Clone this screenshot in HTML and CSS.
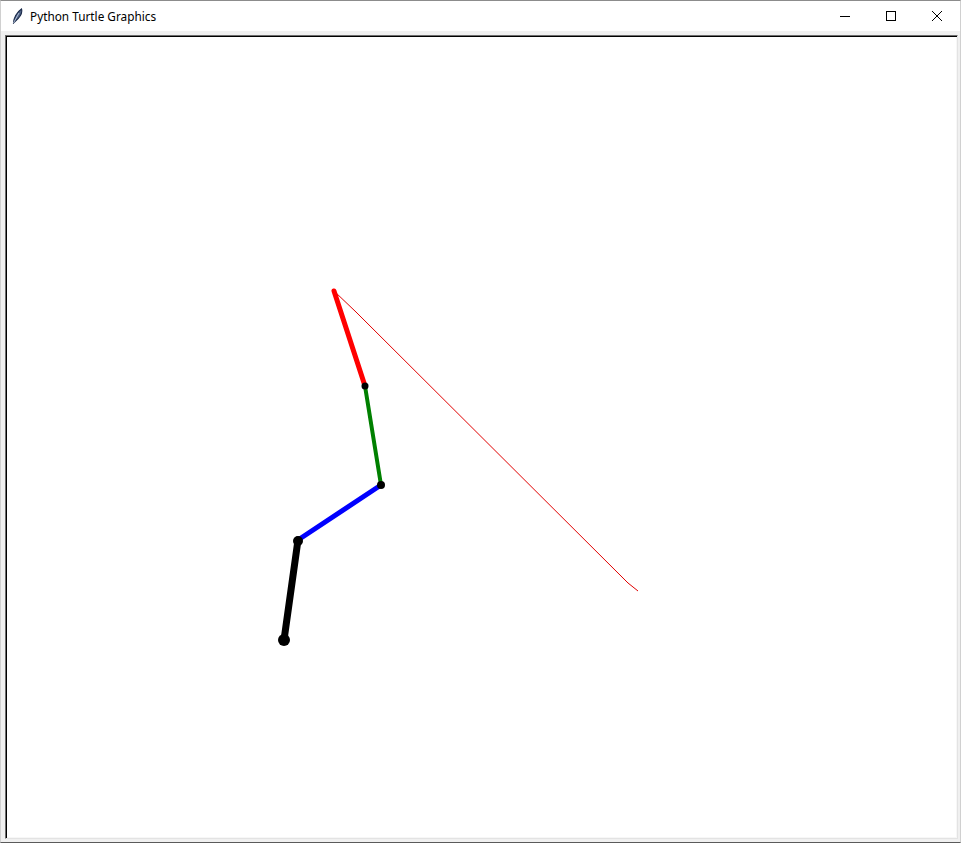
FILE: index.html
```html
<!DOCTYPE html>
<html>
<head>
<meta charset="utf-8">
<title>Python Turtle Graphics</title>
<link rel="stylesheet" href="styles.css">
</head>
<body>
<div class="window">
  <div class="titlebar">
    <div class="app-icon">
      <svg width="16" height="16" viewBox="0 0 16 16">
        <path d="M4.5 15 C4.5 10 8 4 12.5 1 C13.5 4.5 11 9.5 6 13.5 Z" fill="#4f6284" stroke="#1a2a4a" stroke-width="1.1"/>
        <path d="M4.5 15 L10 5" stroke="#c9d6ea" stroke-width="0.8" fill="none"/>
      </svg>
    </div>
    <div class="title">Python Turtle Graphics</div>
    <div class="controls">
      <div class="ctl">
        <svg width="12" height="12" viewBox="0 0 12 12"><path d="M1 6.5 H11" stroke="#000" stroke-width="1"/></svg>
      </div>
      <div class="ctl">
        <svg width="12" height="12" viewBox="0 0 12 12"><rect x="1.5" y="1.5" width="9" height="9" fill="none" stroke="#000" stroke-width="1"/></svg>
      </div>
      <div class="ctl">
        <svg width="12" height="12" viewBox="0 0 12 12"><path d="M1 1 L11 11 M11 1 L1 11" stroke="#000" stroke-width="1"/></svg>
      </div>
    </div>
  </div>
  <div class="frame">
    <div class="canvas">
      <svg class="drawing" viewBox="7 37 949 800" preserveAspectRatio="none">
        <polyline points="334,291 356,312 628,583 638,591" fill="none" stroke="#e00000" stroke-width="1"/>
        <line x1="334" y1="291" x2="365" y2="386" stroke="#ff0000" stroke-width="5" stroke-linecap="round"/>
        <line x1="365" y1="386" x2="381" y2="485" stroke="#008000" stroke-width="4" stroke-linecap="round"/>
        <line x1="381" y1="485" x2="298" y2="540" stroke="#0000ff" stroke-width="5" stroke-linecap="round"/>
        <line x1="298" y1="540" x2="284" y2="640" stroke="#000000" stroke-width="7" stroke-linecap="round"/>
        <circle cx="365" cy="386" r="3.5" fill="#000"/>
        <circle cx="381" cy="485" r="4" fill="#000"/>
        <circle cx="298" cy="541" r="5" fill="#000"/>
        <circle cx="284" cy="640" r="6" fill="#000"/>
      </svg>
    </div>
  </div>
</div>
</body>
</html>
```
FILE: styles.css
```css
html, body {
  margin: 0;
  padding: 0;
  background: #ffffff;
}

.window {
  width: 961px;
  height: 843px;
  box-sizing: border-box;
  border-top: 1px solid #8c8c8c;
  border-left: 1px solid #d0d0d0;
  border-right: 1px solid #d0d0d0;
  border-bottom: 1px solid #5a5a5a;
  display: flex;
  flex-direction: column;
  background: #f0f0f0;
}

.titlebar {
  height: 30px;
  flex: none;
  background: #ffffff;
  display: flex;
  align-items: center;
  font-family: "Noto Sans", "Open Sans", sans-serif;
  font-size: 11.8px;
  color: #000;
}

.app-icon {
  width: 16px;
  height: 16px;
  margin-left: 8px;
  margin-right: 5px;
  display: flex;
}

.title {
  flex: 1;
  white-space: nowrap;
}

.controls {
  display: flex;
  height: 30px;
}

.ctl {
  width: 46px;
  height: 30px;
  display: flex;
  align-items: center;
  justify-content: center;
}

.frame {
  flex: 1;
  display: flex;
  padding: 4px 2px 3px 4px;
  min-height: 0;
}

.canvas {
  flex: 1;
  display: flex;
  background: #ffffff;
  border-top: 1px solid #6d6d6d;
  border-left: 1px solid #6d6d6d;
  border-right: 1px solid #e3e3e3;
  border-bottom: 1px solid #e3e3e3;
  box-shadow: inset 1px 1px 0 #000000, inset -1px -1px 0 #f7f7f7;
  padding: 1px;
  min-height: 0;
}

.drawing {
  display: block;
  width: 100%;
  height: 100%;
}
```
